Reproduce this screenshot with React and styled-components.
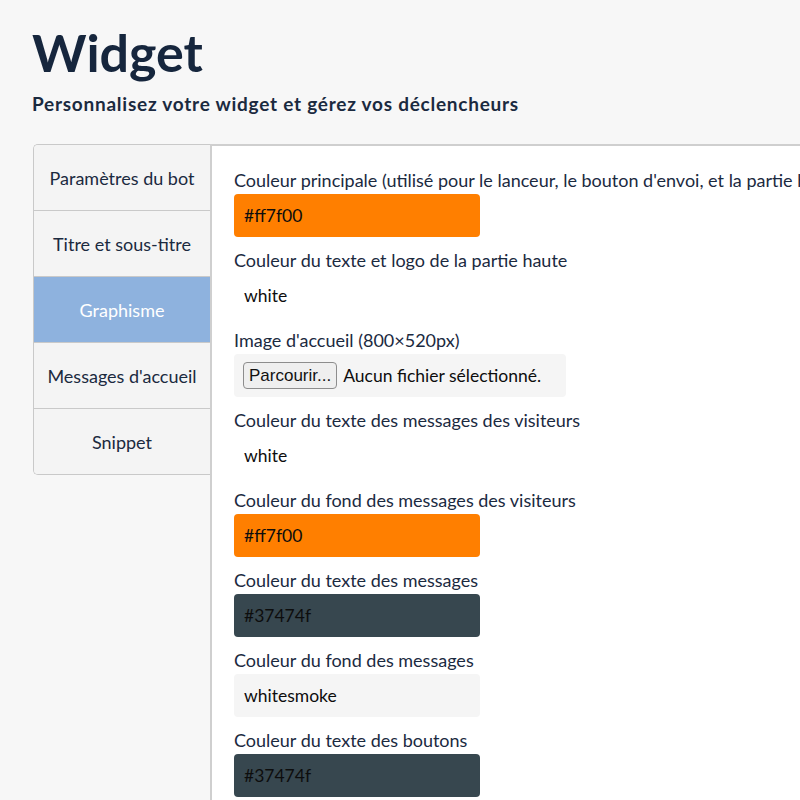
import React from 'react'
import styled, { createGlobalStyle } from 'styled-components'

const GlobalStyle = createGlobalStyle`
    html, body {
        margin: 0;
        padding: 0;
        background: #f7f7f7;
        font-family: Lato, 'Noto Sans', sans-serif;
        color: #1b2a3f;
        overflow: hidden;
    }
`

const tabs = [
    'Paramètres du bot',
    'Titre et sous-titre',
    'Graphisme',
    "Messages d'accueil",
    'Snippet',
]

const fields = [
    { label: "Couleur principale (utilisé pour le lanceur, le bouton d'envoi, et la partie haute)", value: '#ff7f00', bg: '#ff7f00' },
    { label: 'Couleur du texte et logo de la partie haute', value: 'white', bg: '#ffffff' },
    { label: "Image d'accueil (800×520px)", file: true },
    { label: 'Couleur du texte des messages des visiteurs', value: 'white', bg: '#ffffff' },
    { label: 'Couleur du fond des messages des visiteurs', value: '#ff7f00', bg: '#ff7f00' },
    { label: 'Couleur du texte des messages', value: '#37474f', bg: '#37474f' },
    { label: 'Couleur du fond des messages', value: 'whitesmoke', bg: '#f5f5f5' },
    { label: 'Couleur du texte des boutons', value: '#37474f', bg: '#37474f' },
]

const App = () => {
    return (
        <Page>
            <GlobalStyle />
            <Header>
                <h1>Widget</h1>
                <h2>Personnalisez votre widget et gérez vos déclencheurs</h2>
            </Header>

            <Body>
                <TabList>
                    {tabs.map((t) => (
                        <Tab key={t} $active={t === 'Graphisme'}>{t}</Tab>
                    ))}
                </TabList>

                <Panel>
                    {fields.map((f) => (
                        <Field key={f.label}>
                            <Label>{f.label}</Label>
                            {f.file ? (
                                <FileBox>
                                    <FileButton>Parcourir...</FileButton>
                                    <span>Aucun fichier sélectionné.</span>
                                </FileBox>
                            ) : (
                                <ColorInput $bg={f.bg}>{f.value}</ColorInput>
                            )}
                        </Field>
                    ))}
                </Panel>
            </Body>
        </Page>
    )
}

const Page = styled.div`
    width: 800px;
    height: 800px;
    display: flex;
    flex-direction: column;
`

const Header = styled.div`
    padding: 22px 0 0 32px;

    h1 {
        margin: 0;
        font-size: 52px;
        line-height: 60px;
        font-weight: 700;
        color: #16263d;
    }

    h2 {
        margin: 10px 0 0 0;
        font-size: 19px;
        line-height: 24px;
        font-weight: 700;
        letter-spacing: 0.75px;
        color: #1b2a3f;
    }
`

const Body = styled.div`
    margin-top: 28px;
    padding-left: 33px;
    display: flex;
    flex: 1;
    align-items: flex-start;
`

const TabList = styled.div`
    width: 176px;
    display: flex;
    flex-direction: column;
    border: 1px solid #c9c9c9;
    border-right: none;
    border-radius: 5px 0 0 5px;
    overflow: hidden;
    background: #f4f4f4;
`

const Tab = styled.div`
    height: 65px;
    display: flex;
    align-items: center;
    justify-content: center;
    font-size: 18px;
    color: ${(p) => (p.$active ? '#ffffff' : '#1b2a3f')};
    background: ${(p) => (p.$active ? '#8eb2de' : '#f4f4f4')};
    border-top: 1px solid #c9c9c9;

    &:first-child {
        border-top: none;
    }
`

const Panel = styled.div`
    flex: 1;
    align-self: stretch;
    background: #ffffff;
    border-top: 2px solid #cfcfcf;
    border-left: 2px solid #cfcfcf;
    padding: 23px 0 0 22px;
    display: flex;
    flex-direction: column;
    gap: 12px;
    overflow: hidden;
    white-space: nowrap;
`

const Field = styled.div`
    display: flex;
    flex-direction: column;
    gap: 3px;
`

const Label = styled.div`
    font-size: 18px;
    line-height: 22px;
    color: #1b2a3f;
`

const ColorInput = styled.div`
    width: 246px;
    height: 43px;
    box-sizing: border-box;
    padding-left: 10px;
    display: flex;
    align-items: center;
    border-radius: 4px;
    background: ${(p) => p.$bg};
    font-size: 17.5px;
    color: #0d0d0d;
`

const FileBox = styled.div`
    width: 332px;
    height: 43px;
    box-sizing: border-box;
    padding-left: 9px;
    display: flex;
    align-items: center;
    gap: 6px;
    border-radius: 4px;
    background: #f5f5f5;
    font-size: 17.5px;
    color: #0d0d0d;
`

const FileButton = styled.button`
    height: 27px;
    padding: 0 5px;
    font-family: 'Liberation Sans', Arial, sans-serif;
    font-size: 17px;
    color: #111111;
    background: #efefef;
    border: 1px solid #8d8d8d;
    border-radius: 4px;
`

export default App
